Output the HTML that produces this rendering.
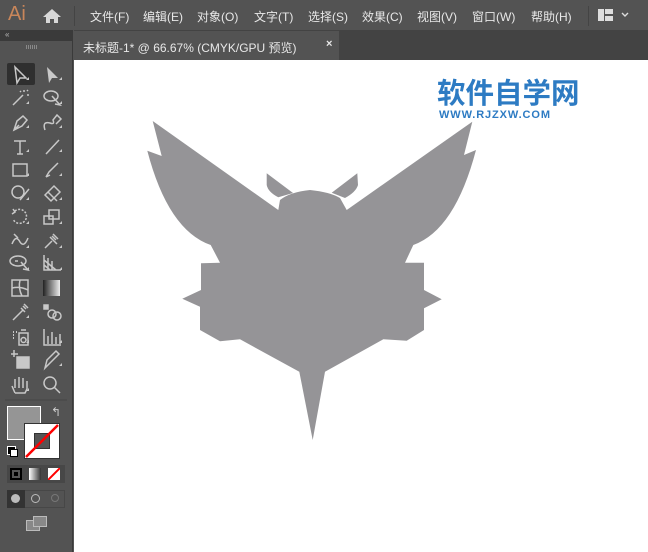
<!DOCTYPE html>
<html><head><meta charset="utf-8"><style>
*{margin:0;padding:0;box-sizing:border-box}
body{width:648px;height:552px;overflow:hidden;background:#535353;font-family:"Liberation Sans","Noto Sans CJK SC",sans-serif;position:relative}
.menu{position:absolute;left:0;top:0;width:648px;height:30px;background:#535353;color:#e8e8e8;font-size:12px}
.menu span{position:absolute;top:8px;white-space:nowrap}
.tabrow{position:absolute;left:74px;top:30px;width:574px;height:30px;background:#434343}
.tab{position:absolute;left:0;top:1px;width:265px;height:29px;background:#535353;color:#e8e8e8;font-size:12px;padding:8px 0 0 9px;white-space:nowrap}
.left{position:absolute;left:0;top:30px;width:73px;height:522px;background:#535353;border-right:1px solid #3a3a3a}
.canvas{position:absolute;left:74px;top:60px;width:574px;height:492px;background:#fff}
</style></head><body>
<div class="menu">
<span style="left:8px;top:3px;color:#c9865a;font-size:20px">Ai</span>
<svg style="position:absolute;left:42px;top:8px" width="20" height="16"><path d="M10 1 L19 9 H16 V15 H12 V11 H8 V15 H4 V9 H1Z" fill="#d8d8d8"/></svg>
<div style="position:absolute;left:74px;top:6px;width:1px;height:20px;background:#444"></div>
<span style="left:90px">文件(F)</span><span style="left:143px">编辑(E)</span><span style="left:197px">对象(O)</span><span style="left:254px">文字(T)</span><span style="left:308px">选择(S)</span><span style="left:362px">效果(C)</span><span style="left:417px">视图(V)</span><span style="left:472px">窗口(W)</span><span style="left:531px">帮助(H)</span>
<div style="position:absolute;left:588px;top:6px;width:1px;height:20px;background:#444"></div>
<svg style="position:absolute;left:598px;top:9px" width="40" height="12"><rect x="0" y="0" width="6" height="12" fill="#ddd"/><rect x="7" y="0" width="8" height="5" fill="#ddd"/><rect x="7" y="7" width="8" height="5" fill="#ddd"/><path d="M24 4 L27 7 L30 4" stroke="#ddd" fill="none" stroke-width="1.4"/></svg>
</div>
<div class="left">
<div style="position:absolute;left:0;top:0;width:73px;height:11px;background:#3a3a3a;color:#bbb;font-size:8px;padding-left:5px">«</div>
<div style="position:absolute;left:26px;top:15px;width:12px;height:4px;background:repeating-linear-gradient(90deg,#888 0 1px,transparent 1px 2px)"></div>
</div>
<div class="tabrow"><div class="tab">未标题-1* @ 66.67% (CMYK/GPU 预览)<span style="position:absolute;left:252px;top:7px;font-size:11px;font-weight:bold">×</span></div></div>
<div style="position:absolute;left:7px;top:63px;width:28px;height:22px;background:#2f2f2f;border-radius:2px"></div>
<svg style="position:absolute;left:0;top:0" width="74" height="552">
<g fill="none" stroke="#c8c8c8" stroke-width="1.5">
<g transform="translate(20,75)"><path d="M-5 -8 L6 3 L0 3 L-3 8Z"/></g>
<g transform="translate(20,98)"><path d="M-7 7 L3 -3 M4 -8 V-6 M7 -3 H9 M7 -7 L8 -8 M1 -6 L0 -7"/></g>
<g transform="translate(52,98)"><ellipse cx="-1" cy="-2" rx="7" ry="5"/><path d="M0 -2 L8 7 L3 6"/></g>
<g transform="translate(20,123)"><path d="M-6 7 L-3 -2 L3 -7 L7 -3 L2 3Z M-6 7 L-1 2"/></g>
<g transform="translate(52,123)"><path d="M-7 7 Q-10 -2 -2 0 Q3 2 1 -3 L5 -8 L9 -4 L4 1"/></g>
<g transform="translate(20,147)"><path d="M-6 -6 H6 M0 -6 V7 M-3 7 H3"/></g>
<g transform="translate(52,147)"><path d="M-6 7 L7 -7"/></g>
<g transform="translate(20,170)"><rect x="-7" y="-6" width="14" height="12"/></g>
<g transform="translate(52,170)"><path d="M-6 7 L-3 2 L6 -7 M-6 7 L-2 5"/></g>
<g transform="translate(20,193)"><circle cx="-2" cy="-1" r="6"/><path d="M0 7 L9 -4"/></g>
<g transform="translate(52,193)"><path d="M-7 2 L2 -7 L8 -1 L-1 8Z M-4 -1 L5 8"/></g>
<g transform="translate(20,217)"><path d="M-5 -6 A7 7 0 1 1 -7 2" stroke-dasharray="2 1.5"/><path d="M-7 -8 L-5 -5 L-8 -3"/></g>
<g transform="translate(52,217)"><rect x="-8" y="-1" width="9" height="8"/><rect x="-3" y="-7" width="10" height="9"/></g>
<g transform="translate(20,240)"><path d="M-8 4 Q-4 -6 0 2 Q4 8 8 -2 M-6 -6 L-2 -2"/></g>
<g transform="translate(52,240)"><path d="M-7 8 L0 1 M-2 -3 L5 4 M1 -6 L6 -1 M0 -4 L4 0"/></g>
<g transform="translate(20,263)"><ellipse cx="-2" cy="-2" rx="8" ry="5"/><path d="M1 -1 L8 7 L3 6 M-5 -2 H-2"/></g>
<g transform="translate(52,263)"><path d="M-8 -8 V7 H9 M-8 -3 L4 7 M-8 2 L-2 7 M-4 -5 L-4 7 M0 -2 V7"/></g>
<g transform="translate(20,288)"><rect x="-8" y="-8" width="16" height="16"/><path d="M-8 0 Q0 -2 8 2 M0 -8 Q-2 0 2 8"/></g>
<g transform="translate(20,312)"><path d="M-7 8 L3 -2 M1 -4 L5 0 M3 -6 L6 -3 M4 -8 L8 -4"/></g>
<g transform="translate(52,312)"><circle cx="0" cy="2" r="4"/><circle cx="5" cy="4" r="4"/><rect x="-8" y="-7" width="4" height="4" fill="#c8c8c8"/></g>
<g transform="translate(22,337)"><rect x="-3" y="-4" width="9" height="12"/><circle cx="1.5" cy="3" r="2.5"/><path d="M-1 -7 H4"/><path d="M-9 -5 h1 M-6 -5 h1 M-9 -2 h1 M-9 1 h1" stroke-width="2"/></g>
<g transform="translate(52,337)"><path d="M-8 -8 V8 H9 M-4 7 V-1 M0 7 V-5 M4 7 V0 M8 7 V-3"/></g>
<g transform="translate(20,360)"><path d="M-6 -10 V-3 M-9 -6 H-2"/><rect x="-3" y="-3" width="12" height="11" fill="#c8c8c8"/></g>
<g transform="translate(52,360)"><path d="M-7 8 L-5 0 L4 -9 L7 -6 L-2 3 Z"/></g>
<g transform="translate(20,385)"><path d="M-5 8 L-8 1 M-5 3 V-6 M-1 3 V-8 M3 3 V-7 M7 4 V-4 M-5 8 H5 L7 4"/></g>
<g transform="translate(52,385)"><circle cx="-2" cy="-2" r="6"/><path d="M2 2 L8 8"/></g>
</g>
<g fill="#c8c8c8">
<g transform="translate(52,75)"><path d="M-5 -8 L6 3 L0 3 L-3 8Z"/></g>
<rect x="43" y="280" width="17" height="16" fill="url(#g)"/>
<path d="M26 80 l3 0 l0 -3Z M59 80 l3 0 l0 -3Z M26 104 l3 0 l0 -3Z M59 104 l3 0 l0 -3Z M26 128 l3 0 l0 -3Z M59 128 l3 0 l0 -3Z M26 152 l3 0 l0 -3Z M59 152 l3 0 l0 -3Z M26 176 l3 0 l0 -3Z M59 176 l3 0 l0 -3Z M26 200 l3 0 l0 -3Z M59 200 l3 0 l0 -3Z M26 224 l3 0 l0 -3Z M59 224 l3 0 l0 -3Z M59 248 l3 0 l0 -3Z M26 248 l3 0 l0 -3Z M26 270 l3 0 l0 -3Z M59 270 l3 0 l0 -3Z M26 318 l3 0 l0 -3Z M26 343 l3 0 l0 -3Z M59 343 l3 0 l0 -3Z M59 366 l3 0 l0 -3Z M26 391 l3 0 l0 -3Z"/>
</g>
<defs><linearGradient id="g"><stop offset="0" stop-color="#222"/><stop offset="1" stop-color="#eee"/></linearGradient></defs>
<line x1="5" y1="400" x2="67" y2="400" stroke="#444"/>
</svg>
<div style="position:absolute;left:7px;top:406px;width:34px;height:34px;background:#959595;border:1px solid #fff"></div>
<div style="position:absolute;left:24px;top:423px;width:36px;height:36px;background:#fff;border:1px solid #333"></div>
<div style="position:absolute;left:34px;top:433px;width:16px;height:16px;background:#555;border:1px solid #333"></div>
<svg style="position:absolute;left:24px;top:423px" width="36" height="36"><line x1="2" y1="34" x2="34" y2="2" stroke="#f00" stroke-width="2.5"/></svg>
<div style="position:absolute;left:51px;top:405px;color:#ccc;font-size:12px">↰</div>
<div style="position:absolute;left:7px;top:446px;width:9px;height:9px;border:1px solid #fff;background:#000"></div>
<div style="position:absolute;left:10px;top:449px;width:8px;height:8px;border:1px solid #000;background:#fff"></div>
<div style="position:absolute;left:7px;top:465px;width:58px;height:18px;background:#474747"></div>
<div style="position:absolute;left:10px;top:468px;width:12px;height:12px;background:#000;border:2px solid #000;box-shadow:inset 0 0 0 2px #555"></div>
<div style="position:absolute;left:29px;top:468px;width:12px;height:12px;background:linear-gradient(90deg,#fff,#333)"></div>
<div style="position:absolute;left:48px;top:468px;width:12px;height:12px;background:#fff;overflow:hidden"><div style="position:absolute;left:-3px;top:5px;width:18px;height:2px;background:#f00;transform:rotate(-45deg)"></div></div>
<div style="position:absolute;left:7px;top:490px;width:58px;height:18px;border:1px solid #474747"></div>
<div style="position:absolute;left:7px;top:490px;width:18px;height:18px;background:#333"></div>
<div style="position:absolute;left:11px;top:494px;width:9px;height:9px;border-radius:50%;background:#bbb"></div>
<div style="position:absolute;left:31px;top:494px;width:9px;height:9px;border-radius:50%;border:1px solid #bbb"></div>
<div style="position:absolute;left:51px;top:494px;width:8px;height:8px;border-radius:50%;border:1px solid #777"></div>
<div style="position:absolute;left:26px;top:520px;width:14px;height:11px;border:1px solid #bbb;background:#888"></div>
<div style="position:absolute;left:33px;top:516px;width:14px;height:11px;border:1px solid #bbb;background:#888"></div>
<div class="canvas"></div>
<svg style="position:absolute;left:0;top:0" width="648" height="552">
<path fill="#959497" d="M152.7 121 L278.3 210 L280 200 Q290 192 310 190 Q330 192 340 198 L346.7 210 L472.3 121.7 L464 155 L476 150 Q455 230 413.3 245 L405 262.7 L424 262.7 L424 290 L441.7 299.3 L424 308.3 L424 330 L406.7 340.7 L383.3 339.3 L325 371.7 L312.7 440 L299.3 371.7 L240 339.3 L220 341.3 L200 330 L200 306.7 L182.3 298.7 L201 290 L201 263.3 L220 262.7 L210.7 245 Q168 230 147.3 150.7 L161.7 156Z"/>
<path fill="#959497" d="M266.7 173.3 L266.7 185 Q268 192 278.3 197.3 L293 193Z M357.3 173.3 L358 185 Q356 192 345 198 L331.7 192.7Z"/>
</svg>
<div style="position:absolute;left:437px;top:75px;color:#2d7bc3;font-size:28.5px;font-weight:bold;font-family:'Noto Sans CJK SC',sans-serif;line-height:34px">软件自学网</div>
<div style="position:absolute;left:439px;top:109px;color:#2d7bc3;font-size:11px;font-weight:bold;letter-spacing:0.9px">WWW.RJZXW.COM</div>
</body></html>
